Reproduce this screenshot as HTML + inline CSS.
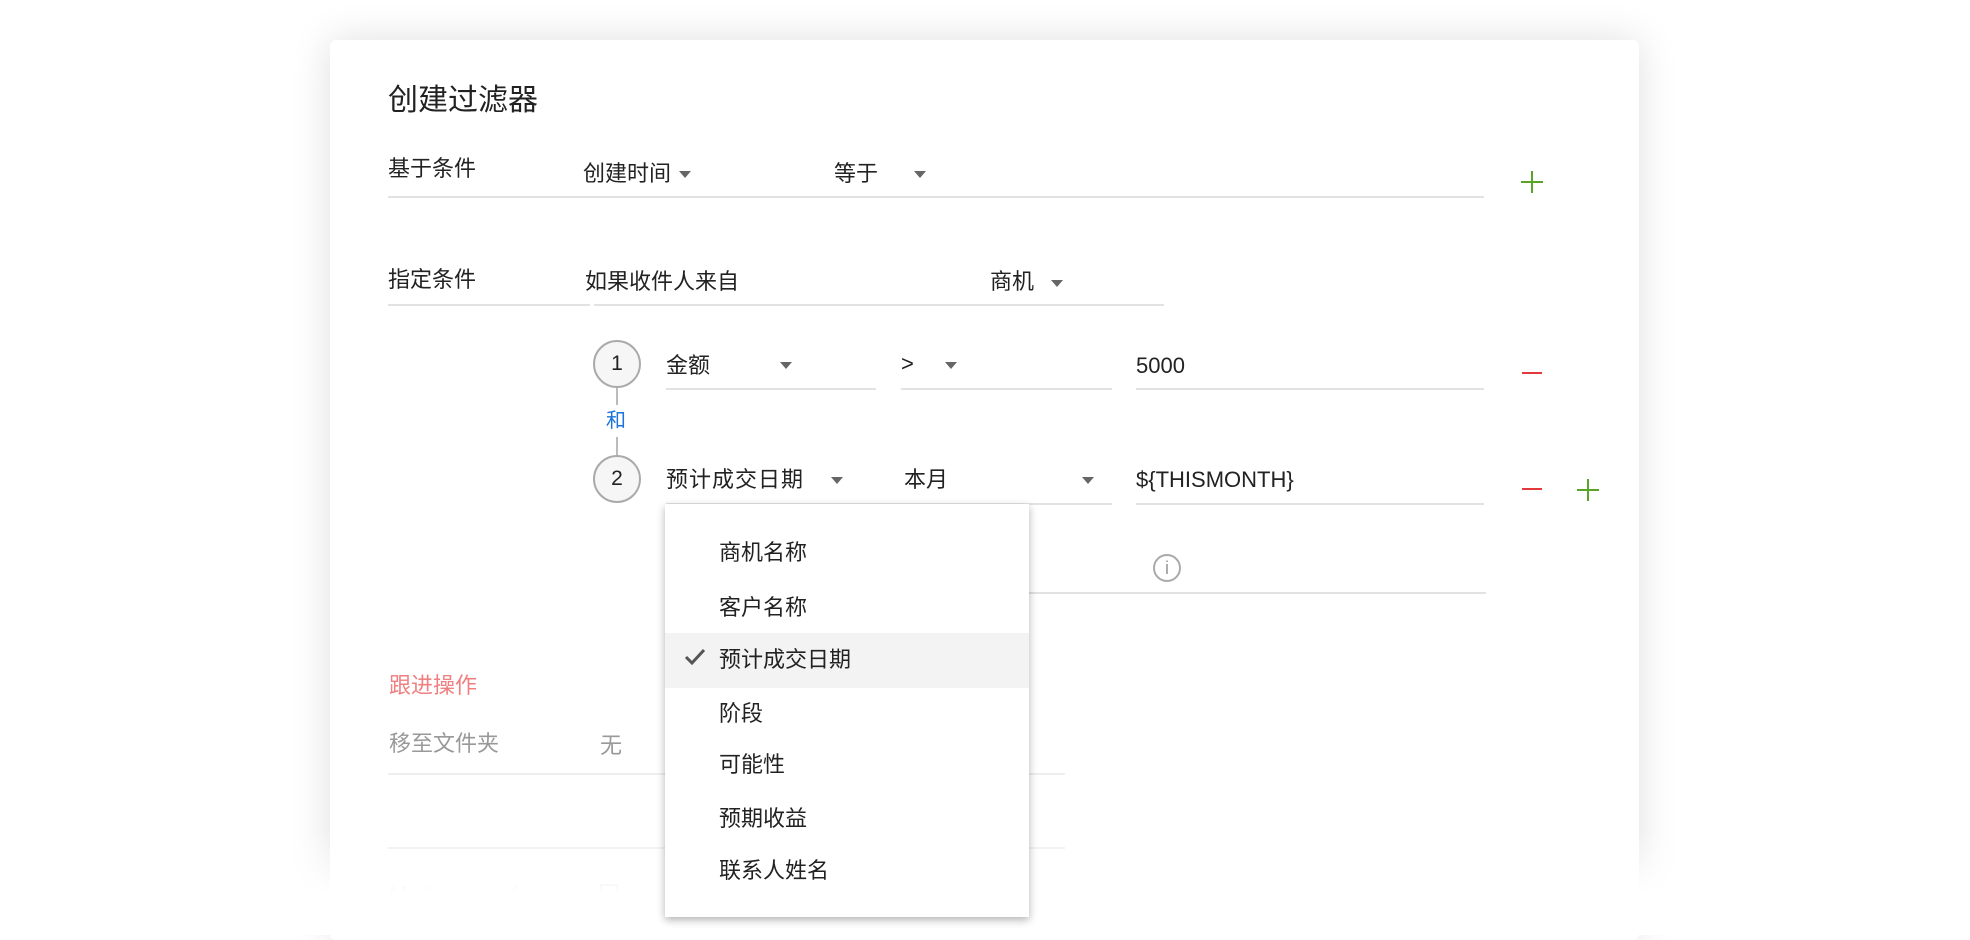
<!DOCTYPE html>
<html><head><meta charset="utf-8"><style>
*{margin:0;padding:0;box-sizing:border-box}
body{width:1970px;height:935px;background:#fff;position:relative;overflow:hidden;font-family:"Liberation Sans","Noto Sans CJK SC",sans-serif;color:#222}
.card{position:absolute;left:330px;top:40px;width:1309px;height:900px;background:#fff;box-shadow:0 0 40px rgba(0,0,0,.13);border-radius:6px}
.t{position:absolute;font-size:22px;line-height:26px;white-space:nowrap}
.ln{position:absolute;height:2px;background:#e2e2e2}
.arr{position:absolute;width:0;height:0;border-left:6px solid transparent;border-right:6px solid transparent;border-top:7px solid #666}
.circ{position:absolute;width:48px;height:48px;border:2px solid #aaa;border-radius:50%;background:#f6f6f6;font-size:21px;text-align:center;line-height:44px}
.minus{position:absolute;width:20px;height:2px;background:#e23a3a}
.plus{position:absolute;width:22px;height:22px}
.plus:before{content:"";position:absolute;left:10px;top:0;width:2px;height:22px;background:#5aa526}
.plus:after{content:"";position:absolute;top:10px;left:0;height:2px;width:22px;background:#5aa526}
.dd{position:absolute;left:665px;top:504px;width:364px;height:413px;background:#fff;box-shadow:0 3px 8px rgba(0,0,0,.3)}
.fade{position:absolute;left:0;top:830px;width:1970px;height:105px;background:linear-gradient(rgba(255,255,255,0),#fff 60%)}
</style></head><body>
<div class="card"></div>
<div class="t" style="left:388px;top:83px;font-size:30px;line-height:36px">创建过滤器</div>

<div class="t" style="left:388px;top:156px">基于条件</div>
<div class="t" style="left:583px;top:161px">创建时间</div>
<div class="arr" style="left:679px;top:171px"></div>
<div class="t" style="left:834px;top:161px">等于</div>
<div class="arr" style="left:914px;top:171px"></div>
<div class="ln" style="left:388px;top:196px;width:1096px"></div>
<div class="plus" style="left:1521px;top:171px"></div>

<div class="t" style="left:388px;top:267px">指定条件</div>
<div class="t" style="left:585px;top:269px">如果收件人来自</div>
<div class="t" style="left:990px;top:269px">商机</div>
<div class="arr" style="left:1051px;top:280px"></div>
<div class="ln" style="left:388px;top:304px;width:202px"></div>
<div class="ln" style="left:594px;top:304px;width:570px"></div>

<div style="position:absolute;left:616px;top:388px;width:2px;height:70px;background:#bbb"></div>
<div style="position:absolute;left:605px;top:405px;width:24px;height:32px;background:#fff"></div>
<div class="circ" style="left:593px;top:340px">1</div>
<div class="t" style="left:606px;top:408px;color:#1a73d9;font-size:20px">和</div>
<div class="circ" style="left:593px;top:455px">2</div>

<div class="t" style="left:666px;top:353px">金额</div>
<div class="arr" style="left:780px;top:362px"></div>
<div class="ln" style="left:666px;top:388px;width:210px"></div>
<div class="t" style="left:901px;top:351px">&gt;</div>
<div class="arr" style="left:945px;top:362px"></div>
<div class="ln" style="left:901px;top:388px;width:211px"></div>
<div class="t" style="left:1136px;top:353px">5000</div>
<div class="ln" style="left:1136px;top:388px;width:348px"></div>
<div class="minus" style="left:1522px;top:372px"></div>

<div class="t" style="left:666px;top:467px;letter-spacing:1px">预计成交日期</div>
<div class="arr" style="left:831px;top:477px"></div>
<div class="t" style="left:904px;top:467px">本月</div>
<div class="arr" style="left:1082px;top:477px"></div>
<div class="ln" style="left:666px;top:503px;width:446px"></div>
<div class="t" style="left:1136px;top:467px">${THISMONTH}</div>
<div class="ln" style="left:1136px;top:503px;width:348px"></div>
<div class="minus" style="left:1522px;top:488px"></div>
<div class="plus" style="left:1577px;top:479px"></div>

<div style="position:absolute;left:1153px;top:554px;width:28px;height:28px;border:2px solid #aaa;border-radius:50%;color:#999;font-size:18px;text-align:center;line-height:24px">i</div>
<div class="ln" style="left:1029px;top:592px;width:457px"></div>

<div class="t" style="left:389px;top:673px;color:#f08080">跟进操作</div>
<div class="t" style="left:389px;top:731px;color:#999">移至文件夹</div>
<div class="t" style="left:600px;top:733px;color:#999">无</div>
<div class="ln" style="left:388px;top:773px;width:677px;background:#eee"></div>
<div class="ln" style="left:388px;top:847px;width:677px;background:#eee"></div>
<div class="t" style="left:389px;top:882px;color:#ccc">Mark as read</div>
<div style="position:absolute;left:600px;top:884px;width:18px;height:18px;border:2px solid #ccc"></div>
<div class="fade"></div>

<div class="dd">
<div style="position:absolute;left:0;top:129px;width:364px;height:55px;background:#f3f3f3"></div>
<div class="t" style="left:54px;top:36px">商机名称</div>
<div class="t" style="left:54px;top:91px">客户名称</div>
<svg style="position:absolute;left:19px;top:143px" width="22" height="20" viewBox="0 0 22 20"><path d="M2 10l6 6L20 3" stroke="#555" stroke-width="3" fill="none"/></svg>
<div class="t" style="left:54px;top:143px">预计成交日期</div>
<div class="t" style="left:54px;top:197px">阶段</div>
<div class="t" style="left:54px;top:248px">可能性</div>
<div class="t" style="left:54px;top:302px">预期收益</div>
<div class="t" style="left:54px;top:354px">联系人姓名</div>
</div>
</body></html>
